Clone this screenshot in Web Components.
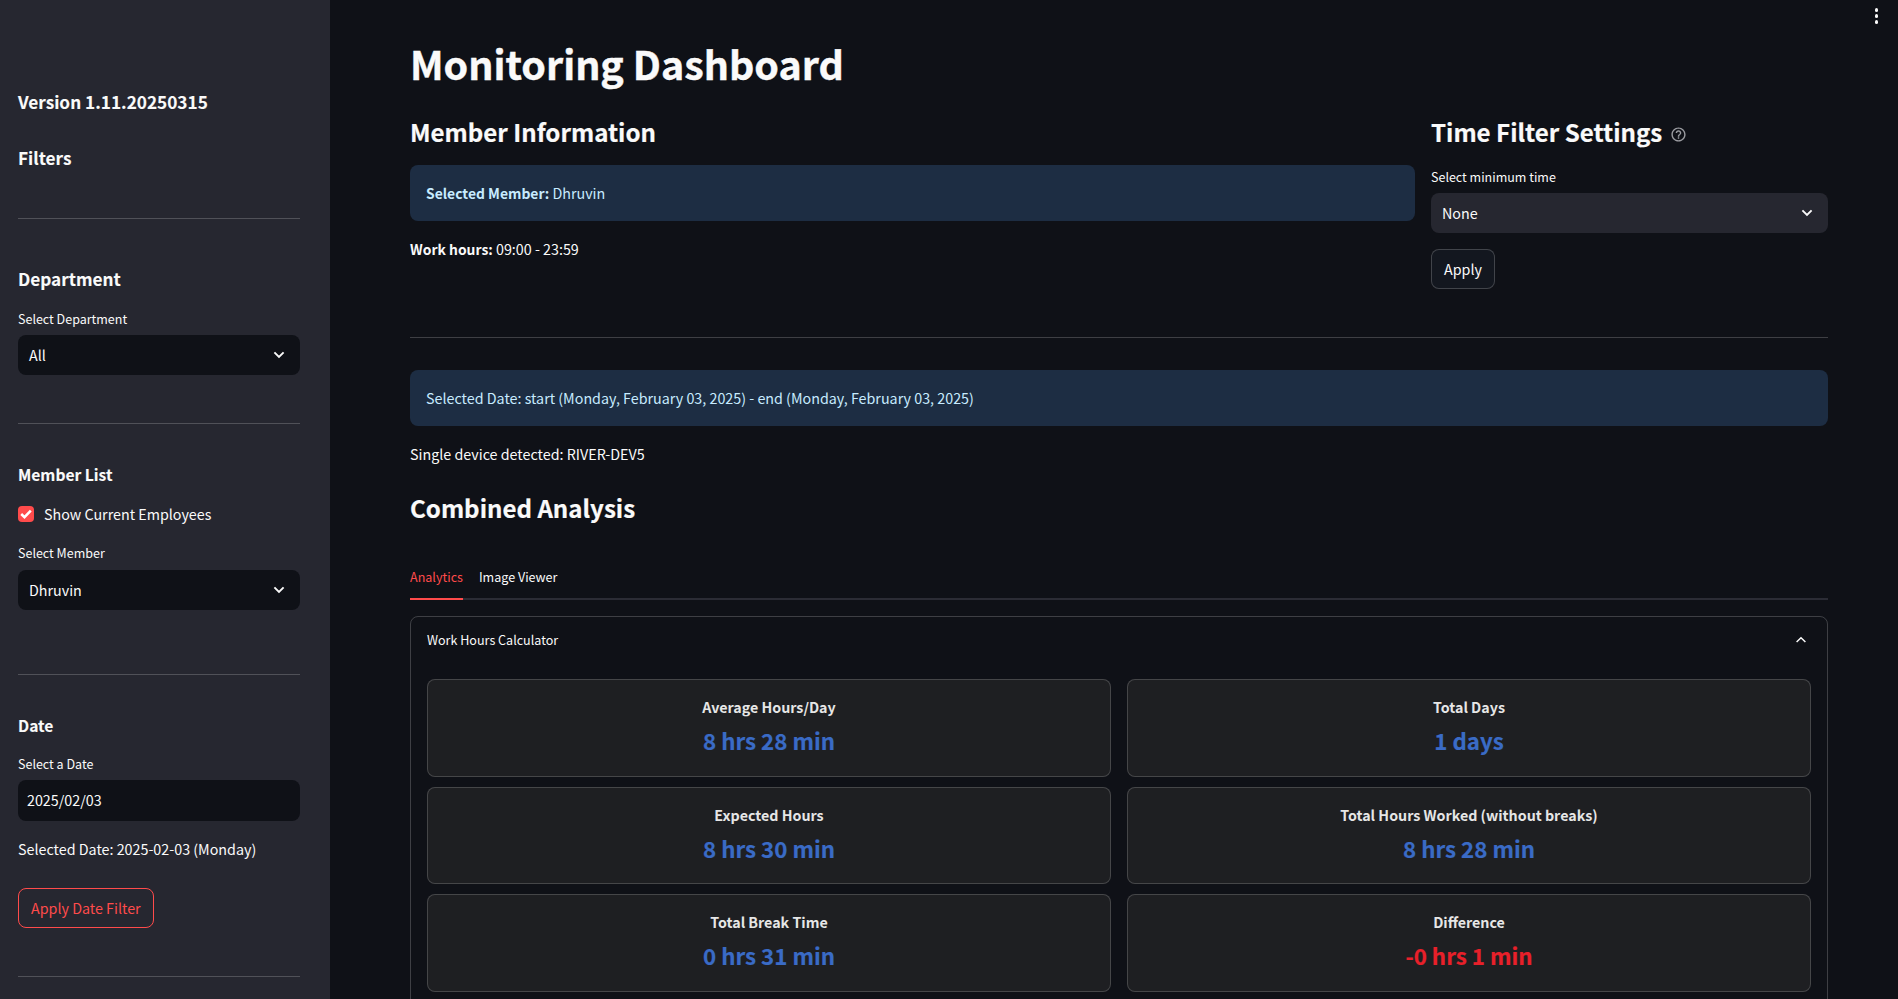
<!DOCTYPE html>
<html lang="en">
<head>
<meta charset="utf-8">
<title>Monitoring Dashboard</title>
<style>
    html, body { margin: 0; height: 100%; overflow: hidden; background: #0f1117; }
    body {
        font-family: "Noto Sans CJK SC", "Source Sans Pro", "Noto Sans", sans-serif;
        color: #fafafa;
        font-size: 14.3px;
    }
    b { font-size: 13.9px; }
    st-sidebar { --fieldBg: #0f1117; }
    st-main { --fieldBg: #262730; }
</style>
</head>
<body>
<st-app>
    <st-sidebar slot="side">
        <st-heading size="20" top="0">Version 1.11.20250315</st-heading>
        <st-heading size="20" top="26">Filters</st-heading>
        <st-divider top="45"></st-divider>
        <st-heading size="20" top="45">Department</st-heading>
        <st-select label="Select Department" top="15">All</st-select>
        <st-divider top="48"></st-divider>
        <st-heading size="16" top="35">Member List</st-heading>
        <st-checkbox top="13">Show Current Employees</st-checkbox>
        <st-select label="Select Member" top="17" gap="7">Dhruvin</st-select>
        <st-divider top="64"></st-divider>
        <st-heading size="16" top="35">Date</st-heading>
        <st-select label="Select a Date" top="14" plain>2025/02/03</st-select>
        <st-text top="16">Selected Date: 2025-02-03 (Monday)</st-text>
        <st-button top="27" accent>Apply Date Filter</st-button>
        <st-divider top="48"></st-divider>
    </st-sidebar>

    <st-main>
        <st-heading size="40">Monitoring Dashboard</st-heading>
        <st-columns top="21">
            <div>
                <st-heading size="28">Member Information</st-heading>
                <st-alert top="13"><b>Selected Member:</b> Dhruvin</st-alert>
                <st-text top="16"><b>Work hours:</b> 09:00 - 23:59</st-text>
            </div>
            <div>
                <st-heading size="28" help>Time Filter Settings</st-heading>
                <st-select label="Select minimum time" top="15">None</st-select>
                <st-button top="16">Apply</st-button>
            </div>
        </st-columns>
        <st-divider top="48"></st-divider>
        <st-alert top="32">Selected Date: start (Monday, February 03, 2025) - end (Monday, February 03, 2025)</st-alert>
        <st-text top="16">Single device detected: RIVER-DEV5</st-text>
        <st-heading size="28" top="22">Combined Analysis</st-heading>
        <st-tabs top="39">
            <st-tab active>Analytics</st-tab>
            <st-tab>Image Viewer</st-tab>
        </st-tabs>
        <st-expander top="16" title="Work Hours Calculator">
            <metric-card label="Average Hours/Day">8 hrs 28 min</metric-card>
            <metric-card label="Total Days">1 days</metric-card>
            <metric-card label="Expected Hours">8 hrs 30 min</metric-card>
            <metric-card label="Total Hours Worked (without breaks)">8 hrs 28 min</metric-card>
            <metric-card label="Total Break Time">0 hrs 31 min</metric-card>
            <metric-card label="Difference" negative>-0 hrs 1 min</metric-card>
        </st-expander>
    </st-main>
</st-app>

<script>
const chevronDown = `<svg width="12" height="8" viewBox="0 0 12 8" fill="none"><path d="M1.4 1.4 6 6l4.6-4.6" stroke="#fafafa" stroke-width="1.9"/></svg>`
const helpIcon = `<svg width="17" height="17" viewBox="0 0 24 24" fill="#9b9ca1"><path d="M11 18h2v-2h-2v2zm1-16C6.48 2 2 6.48 2 12s4.48 10 10 10 10-4.48 10-10S17.52 2 12 2zm0 18c-4.41 0-8-3.59-8-8s3.59-8 8-8 8 3.59 8 8-3.59 8-8 8zm0-14c-2.21 0-4 1.79-4 4h2c0-1.1.9-2 2-2s2 .9 2 2c0 2-3 1.75-3 5h2c0-2.25 3-2.5 3-5 0-2.21-1.79-4-4-4z"/></svg>`

// every element gets its markup from here, top="n" sets the gap above it
class StElement extends HTMLElement {
    constructor() {
        super()
        this.attachShadow({mode: 'open'})
    }
    connectedCallback() {
        this.shadowRoot.innerHTML = this.render()
        if (this.hasAttribute('top')) {
            this.style.marginTop = this.getAttribute('top') + 'px'
        }
    }
}

class StApp extends StElement {
    render() {
        return `
            <style>
                :host { display: flex; height: 999px; overflow: hidden; }
            </style>
            <slot name="side"></slot>
            <slot></slot>
        `
    }
}

class StSidebar extends StElement {
    render() {
        return `
            <style>
                :host {
                    display: flex;
                    flex-direction: column;
                    flex: 0 0 auto;
                    box-sizing: border-box;
                    width: 330px;
                    height: 999px;
                    padding: 87px 30px 0 18px;
                    background: #262730;
                    overflow: hidden;
                }
            </style>
            <slot></slot>
        `
    }
}

class StMain extends StElement {
    render() {
        return `
            <style>
                :host {
                    display: block;
                    position: relative;
                    flex: 1 1 0;
                    min-width: 0;
                    box-sizing: border-box;
                    height: 999px;
                    padding: 35px 70px 0 80px;
                    overflow: hidden;
                }
                .menu {
                    position: absolute;
                    top: 8px;
                    right: 20px;
                    display: flex;
                    flex-direction: column;
                    gap: 2.5px;
                }
                .menu i { width: 3.5px; height: 3.5px; border-radius: 50%; background: #fafafa; }
            </style>
            <div class="menu"><i></i><i></i><i></i></div>
            <slot></slot>
        `
    }
}

class StHeading extends StElement {
    render() {
        const size = Number(this.getAttribute('size'))
        const lineHeight = {16: 30, 20: 30, 28: 40, 40: 56}[size]
        const fontSize = {16: 15.6, 20: 17.2, 28: 24.1, 40: 39.4}[size]
        const stroke = {16: 0.1, 20: 0.1, 28: 0.2, 40: 0.4}[size]
        return `
            <style>
                :host {
                    display: flex;
                    align-items: center;
                    height: ${lineHeight}px;
                    font-size: ${fontSize}px;
                    line-height: ${lineHeight}px;
                    font-weight: 700;
                    white-space: nowrap;
                    -webkit-text-stroke: ${stroke}px currentColor;
                }
                svg { margin: 4px 0 0 8px; }
            </style>
            <slot></slot>${this.hasAttribute('help') ? helpIcon : ''}
        `
    }
}

class StDivider extends StElement {
    render() {
        return `<style>:host { display: block; height: 1px; background: rgba(250, 250, 250, 0.2); }</style>`
    }
}

class StText extends StElement {
    render() {
        return `<style>:host { display: block; line-height: 24px; }</style><slot></slot>`
    }
}

class StSelect extends StElement {
    render() {
        const plain = this.hasAttribute('plain')
        const gap = this.getAttribute('gap') || 6
        return `
            <style>
                :host { display: block; }
                label { display: block; height: 20px; line-height: 20px; font-size: 12.5px; margin-bottom: ${gap}px; }
                .box {
                    display: flex;
                    align-items: center;
                    justify-content: space-between;
                    box-sizing: border-box;
                    height: ${plain ? 41 : 40}px;
                    padding: 0 15px ${plain ? 1 : 0}px ${plain ? 9 : 11}px;
                    border-radius: 8px;
                    background: var(--fieldBg);
                    line-height: 20px;
                }
            </style>
            <label>${this.getAttribute('label')}</label>
            <div class="box"><span><slot></slot></span>${plain ? '' : chevronDown}</div>
        `
    }
}

class StButton extends StElement {
    render() {
        const accent = this.hasAttribute('accent')
        return `
            <style>
                :host {
                    display: inline-flex;
                    align-self: flex-start;
                    align-items: center;
                    box-sizing: border-box;
                    height: 40px;
                    padding: 0 12px 1px;
                    border: 1px solid ${accent ? '#ff4b4b' : 'rgba(250, 250, 250, 0.2)'};
                    border-radius: 8px;
                    color: ${accent ? '#ff4b4b' : '#fafafa'};
                    background: ${accent ? 'transparent' : '#13171f'};
                    line-height: 20px;
                }
            </style>
            <slot></slot>
        `
    }
}

class StCheckbox extends StElement {
    render() {
        return `
            <style>
                :host { display: flex; align-items: center; gap: 10px; height: 24px; line-height: 24px; }
                .tick {
                    display: flex;
                    align-items: center;
                    justify-content: center;
                    width: 16px;
                    height: 16px;
                    border-radius: 4px;
                    background: #ff4b4b;
                }
            </style>
            <div class="tick"><svg width="12" height="10" viewBox="0 0 12 10" fill="none"><path d="M1.2 5 4.5 8.2 10.8 1.6" stroke="#fff" stroke-width="2.5"/></svg></div>
            <span><slot></slot></span>
        `
    }
}

class StColumns extends StElement {
    render() {
        return `
            <style>
                :host { display: grid; grid-template-columns: minmax(0, 1fr) 397px; gap: 16px; }
                ::slotted(div) { display: flex; flex-direction: column; min-width: 0; }
            </style>
            <slot></slot>
        `
    }
}

class StAlert extends StElement {
    render() {
        return `
            <style>
                :host {
                    display: flex;
                    align-items: center;
                    box-sizing: border-box;
                    height: 56px;
                    padding: 0 16px;
                    border-radius: 8px;
                    background: #1d2d43;
                    color: #c7ebff;
                    line-height: 24px;
                    white-space: pre-wrap;
                }
            </style>
            <span><slot></slot></span>
        `
    }
}

class StTabs extends StElement {
    render() {
        return `
            <style>
                :host {
                    display: flex;
                    gap: 16px;
                    height: 33px;
                    box-sizing: border-box;
                    border-bottom: 2px solid #2b2c35;
                }
            </style>
            <slot></slot>
        `
    }
}

class StTab extends StElement {
    render() {
        const active = this.hasAttribute('active')
        return `
            <style>
                :host {
                    display: block;
                    height: 33px;
                    box-sizing: border-box;
                    line-height: 20px;
                    font-size: 12.55px;
                    color: ${active ? '#ff4b4b' : '#fafafa'};
                    ${active ? 'border-bottom: 2px solid #ff4b4b;' : ''}
                }
            </style>
            <slot></slot>
        `
    }
}

class StExpander extends StElement {
    render() {
        return `
            <style>
                :host {
                    display: block;
                    box-sizing: border-box;
                    padding: 0 16px 40px;
                    border: 1px solid rgba(250, 250, 250, 0.2);
                    border-radius: 8px;
                }
                header {
                    display: flex;
                    align-items: center;
                    justify-content: space-between;
                    height: 45px;
                    padding-right: 4px;
                    font-size: 12.55px;
                    margin-bottom: 17px;
                }
                .grid { display: grid; grid-template-columns: 1fr 1fr; gap: 10px 16px; }
            </style>
            <header>
                <span>${this.getAttribute('title')}</span>
                <svg width="12" height="8" viewBox="0 0 12 8" fill="none"><path d="M1.6 6 6 1.8 10.4 6" stroke="#fafafa" stroke-width="1.5"/></svg>
            </header>
            <div class="grid"><slot></slot></div>
        `
    }
}

class MetricCard extends StElement {
    render() {
        const negative = this.hasAttribute('negative')
        return `
            <style>
                :host {
                    display: block;
                    box-sizing: border-box;
                    height: 97.5px;
                    padding-top: 17px;
                    border: 1px solid rgba(250, 250, 250, 0.18);
                    border-radius: 8px;
                    background: #1e1f22;
                    text-align: center;
                }
                .label { line-height: 20px; font-weight: 700; font-size: 14.25px; color: #e6e6e6; }
                .value {
                    margin-top: 6px;
                    line-height: 34px;
                    font-weight: 700;
                    font-size: 22.3px;
                    -webkit-text-stroke: 0.2px currentColor;
                    color: ${negative ? '#e8202a' : '#3a6bc6'};
                }
            </style>
            <div class="label">${this.getAttribute('label')}</div>
            <div class="value"><slot></slot></div>
        `
    }
}

customElements.define('st-app', StApp)
customElements.define('st-sidebar', StSidebar)
customElements.define('st-main', StMain)
customElements.define('st-heading', StHeading)
customElements.define('st-divider', StDivider)
customElements.define('st-text', StText)
customElements.define('st-select', StSelect)
customElements.define('st-button', StButton)
customElements.define('st-checkbox', StCheckbox)
customElements.define('st-columns', StColumns)
customElements.define('st-alert', StAlert)
customElements.define('st-tabs', StTabs)
customElements.define('st-tab', StTab)
customElements.define('st-expander', StExpander)
customElements.define('metric-card', MetricCard)
</script>
</body>
</html>
